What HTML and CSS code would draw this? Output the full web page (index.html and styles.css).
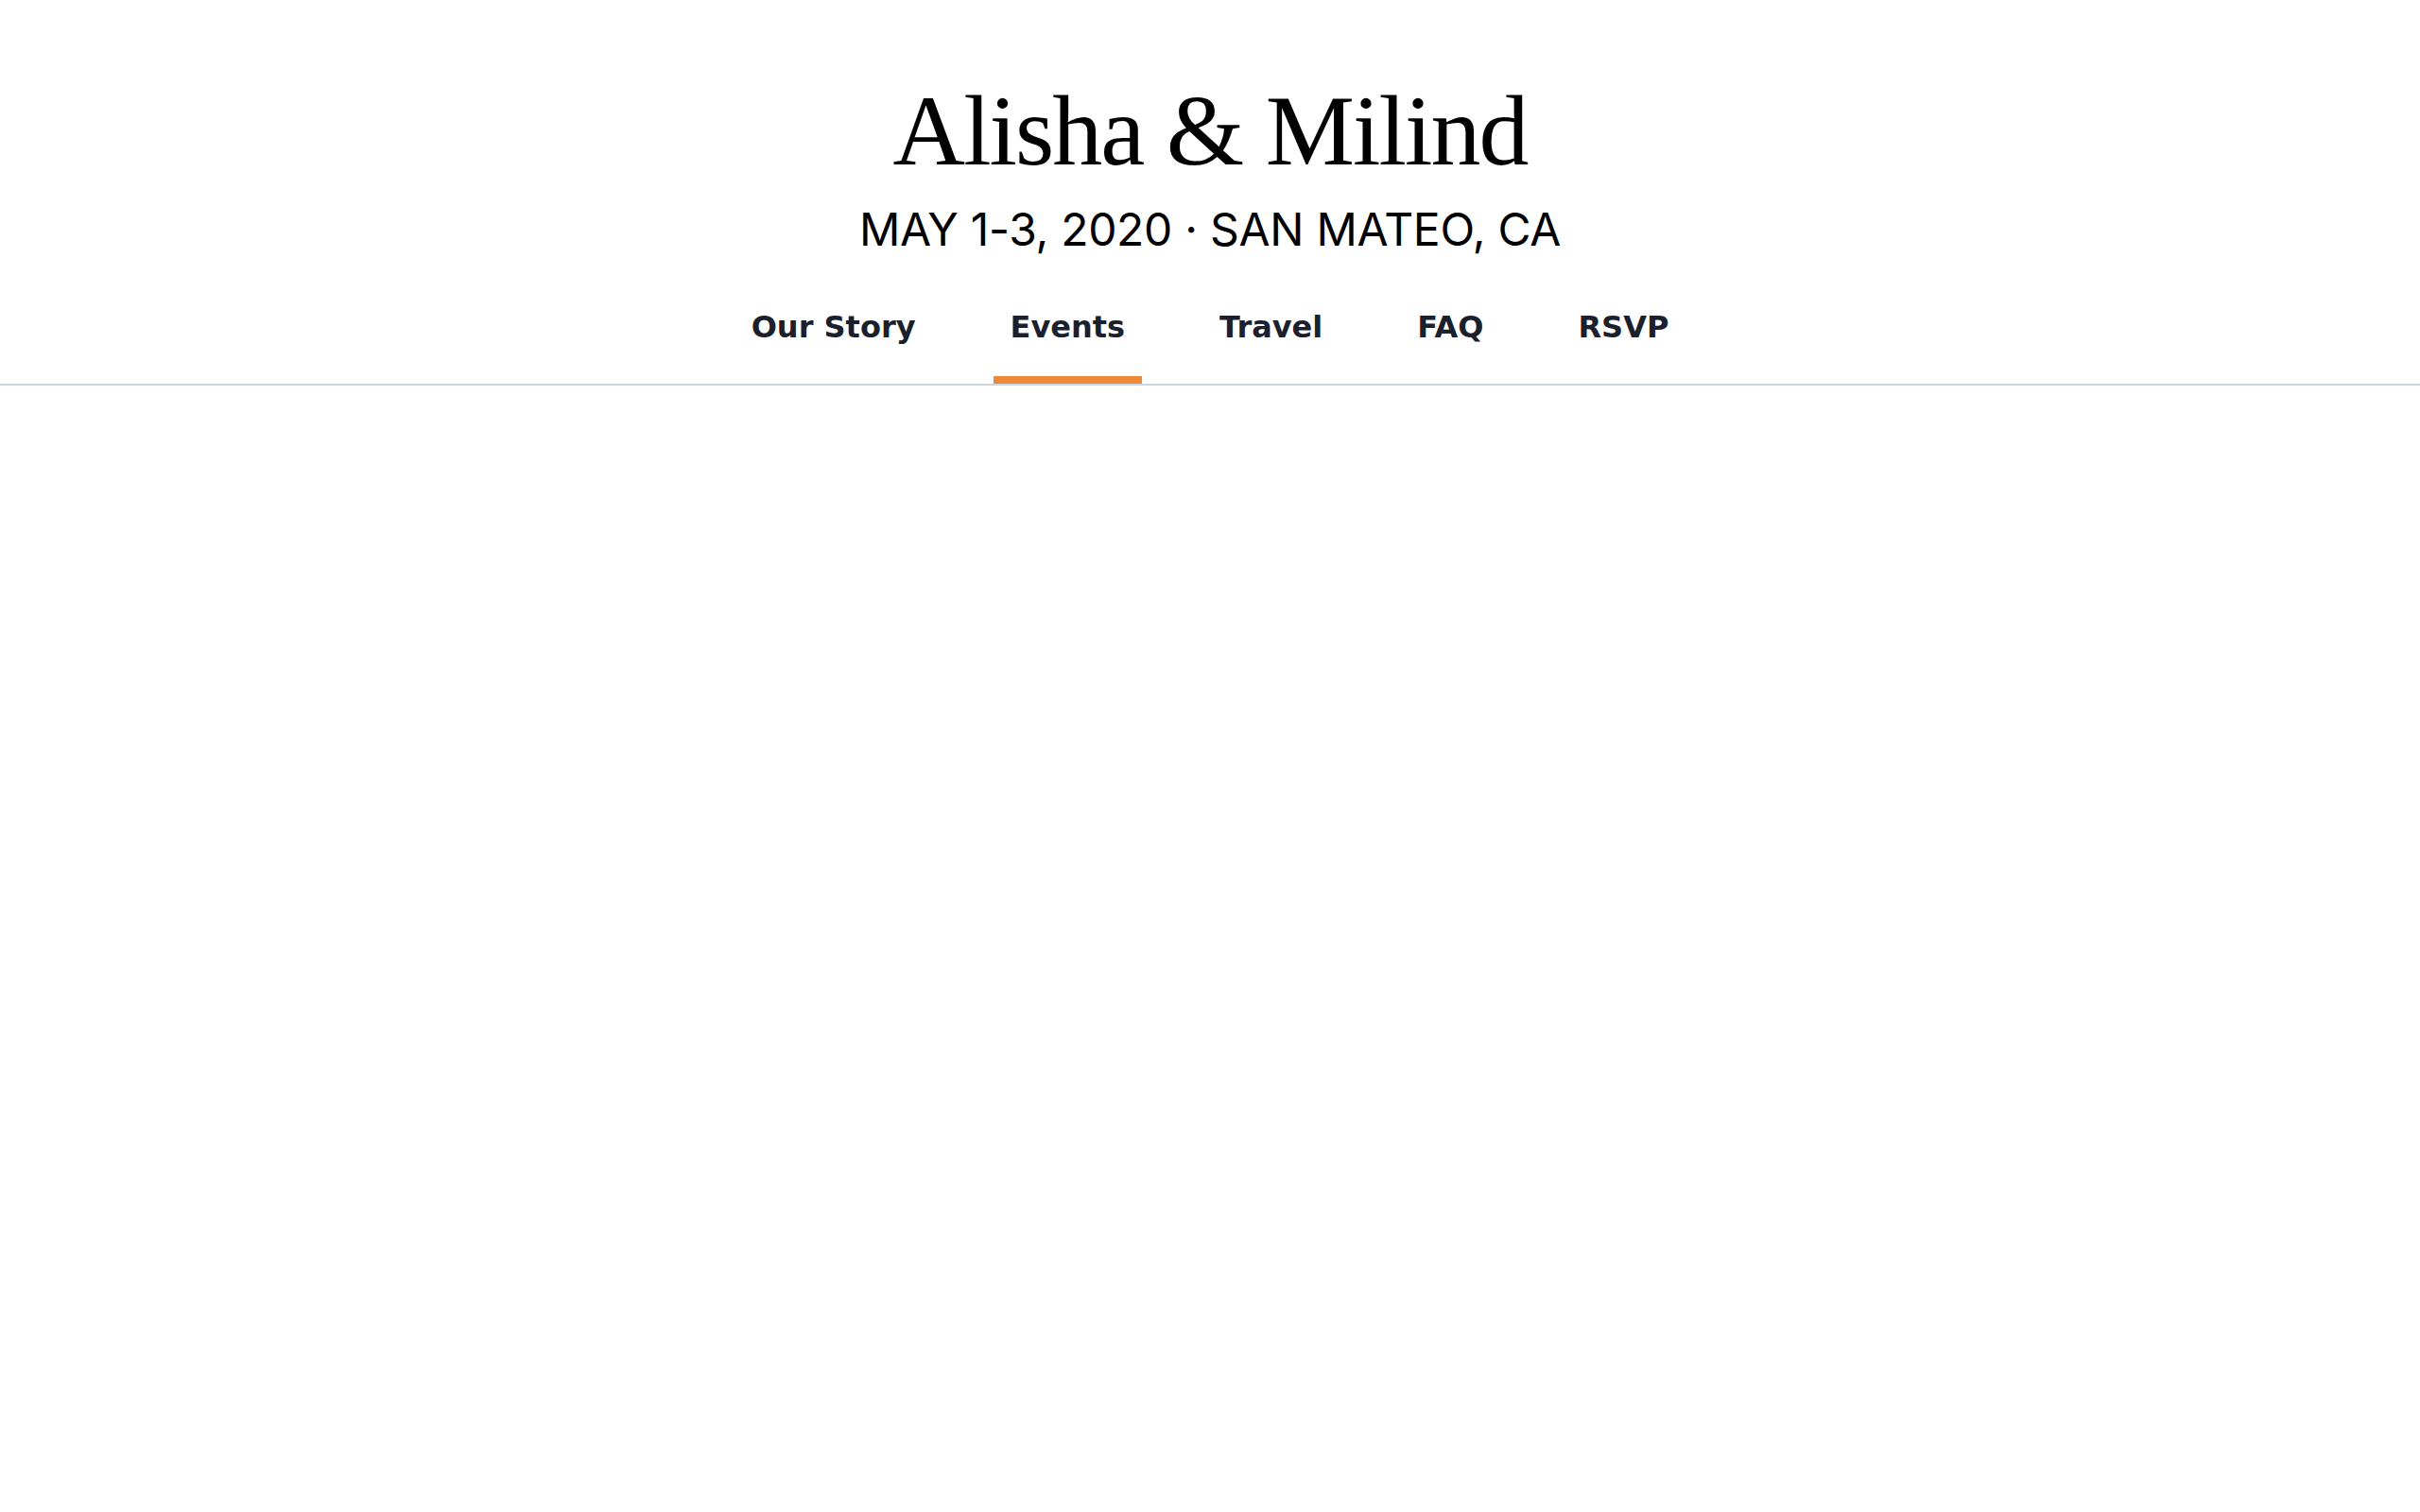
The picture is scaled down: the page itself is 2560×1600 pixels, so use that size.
FILE: index.html
```html
<!DOCTYPE html>
<html lang="en">
<head>
<meta charset="utf-8">
<title>Alisha &amp; Milind</title>
<link rel="stylesheet" href="styles.css">
</head>
<body>
<header class="site-header">
  <h1 class="couple">Alisha &amp; Milind</h1>
  <p class="details">MAY 1-3, 2020 · SAN MATEO, CA</p>
  <nav class="nav">
    <a class="nav-link" href="#story">Our Story</a>
    <a class="nav-link active" href="#events">Events</a>
    <a class="nav-link" href="#travel">Travel</a>
    <a class="nav-link" href="#faq">FAQ</a>
    <a class="nav-link" href="#rsvp">RSVP</a>
  </nav>
</header>
<main class="content"></main>
</body>
</html>
```
FILE: styles.css
```css
html, body {
  margin: 0;
  padding: 0;
  background: #ffffff;
}

.site-header {
  display: flex;
  flex-direction: column;
  align-items: center;
  padding-top: 86px;
  border-bottom: 2px solid #cbd5e0;
}

.couple {
  margin: 0;
  font-family: "Liberation Serif", serif;
  font-weight: 400;
  font-size: 106px;
  line-height: 106px;
  letter-spacing: -2px;
  color: #000000;
}

.details {
  margin: 27px 0 0;
  font-family: Inter, sans-serif;
  font-weight: 400;
  font-size: 48px;
  line-height: 48px;
  letter-spacing: -0.3px;
  color: #000000;
}

.nav {
  display: flex;
  justify-content: center;
  gap: 64px;
  margin-top: 63px;
}

.nav-link {
  display: block;
  padding: 0 18px 36px;
  border-bottom: 8px solid transparent;
  font-family: "DejaVu Sans", sans-serif;
  font-weight: 700;
  font-size: 32px;
  line-height: 32px;
  color: #1a202c;
  text-decoration: none;
}

.nav-link.active {
  border-bottom-color: #ed8936;
}

.content {
  min-height: 1000px;
}
```
